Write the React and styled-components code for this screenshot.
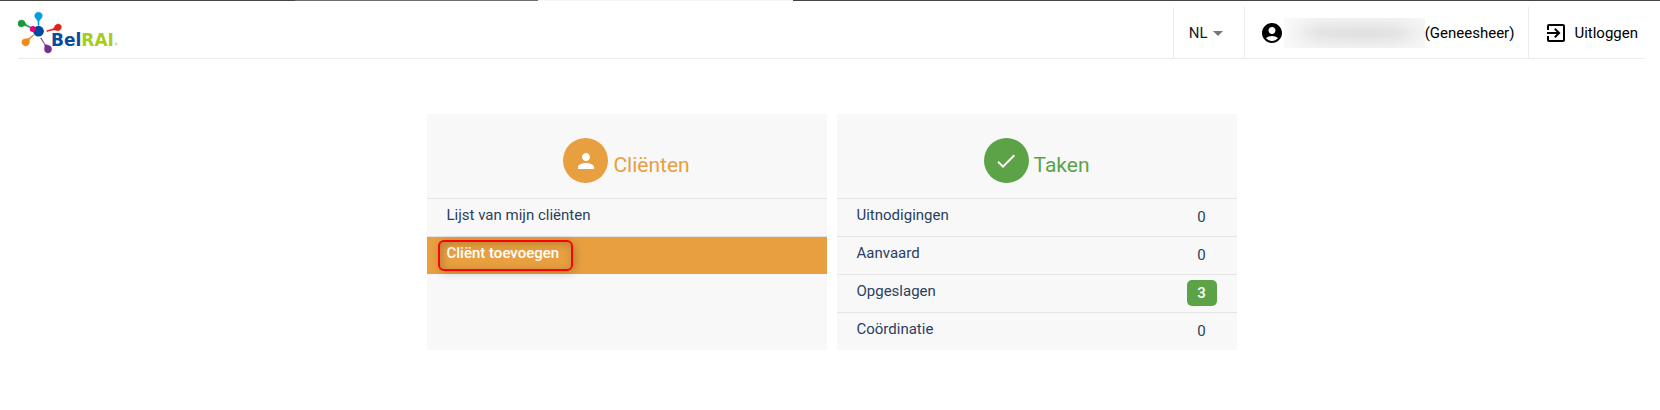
import React, { memo } from "react";
import styled, { createGlobalStyle } from "styled-components";
import {
  MdAccountCircle,
  MdArrowDropDown,
  MdCheck,
  MdExitToApp,
  MdPerson,
} from "react-icons/md";

const GlobalStyle = createGlobalStyle`
  * {
    box-sizing: border-box;
  }
  body {
    margin: 0;
    background: #fff;
    color: #000;
    font-family: Roboto, "Liberation Sans", sans-serif;
    font-size: 15px;
    line-height: 22px;
  }
  a {
    color: inherit;
    text-decoration: none;
  }
  ul {
    list-style: none;
    margin: 0;
    padding: 0;
  }
`;

const TopStrip = styled.div`
  height: 1px;
  background: linear-gradient(
    to right,
    #444 17.8%,
    #6c6c6c 17.8% 32.4%,
    #f6f6f6 32.4% 47.8%,
    #444 47.8%
  );
`;

const Page = styled.div`
  padding: 6px 15px 0 18px;
`;

const Header = styled.header`
  display: flex;
  justify-content: space-between;
  border-bottom: 1px solid #ececec;
`;

const LogoLink = styled.a`
  padding-top: 3px;

  svg {
    display: block;
  }
`;

const HeaderMenu = styled.div`
  display: flex;
`;

const HeaderItem = styled.div`
  display: flex;
  align-items: center;
  height: 51px;
  padding: 0 14px 0 15px;
  border-left: 1px solid #ececec;

  &:last-child {
    padding-right: 7px;
  }
  svg {
    flex: none;
  }
`;

const LanguageField = styled.label`
  display: grid;
  align-items: center;

  select,
  svg {
    grid-area: 1 / 1;
  }
  select {
    appearance: none;
    border: 0;
    margin: 0;
    padding: 0 22px 0 0;
    background: transparent;
    color: #222;
    font: inherit;
  }
  svg {
    justify-self: end;
    color: #757575;
    pointer-events: none;
  }
`;

const HiddenName = styled.span`
  width: 141px;
  height: 30px;
  background: linear-gradient(
      to bottom,
      rgba(248, 248, 248, 0.7),
      rgba(248, 248, 248, 0) 45% 55%,
      rgba(248, 248, 248, 0.7)
    ),
    linear-gradient(
      to right,
      #fafafa,
      #e4e4e4 25%,
      #e0e0e0 60%,
      #e4e4e4 80%,
      #f4f4f4
    );
`;

const LogoutLink = styled.a`
  display: flex;
  align-items: center;
  gap: 6px;
`;

const Cards = styled.main`
  display: flex;
  justify-content: center;
  gap: 10px;
  margin-top: 55px;
`;

const Card = styled.section`
  flex: 0 1 400px;
  background: #f8f8f8;
`;

const CardHead = styled.div`
  display: flex;
  justify-content: center;
  align-items: flex-end;
  gap: 5px;
  padding: 24px 0 15px;
  border-bottom: 1px solid #e4e4e4;
  color: ${(props) => props.$color};

  h2 {
    margin: 0;
    font-size: 21px;
    font-weight: 400;
    line-height: 36px;
  }
`;

const RoundIcon = styled.span`
  display: flex;
  align-items: center;
  justify-content: center;
  width: 45px;
  height: 45px;
  border-radius: 50%;
  background: ${(props) => props.$color};
  color: #fff;
`;

const Row = styled.li`
  & + & {
    border-top: 1px solid #e4e4e4;
  }
`;

const RowLink = styled.a`
  position: relative;
  display: flex;
  justify-content: space-between;
  height: 37px;
  padding: 5px 20px;
  background: ${(props) => (props.$active ? "#e79f3f" : "transparent")};
  && {
    color: ${(props) => (props.$active ? "#fff" : "#2a3f5f")};
  }
  font-weight: ${(props) => (props.$active ? 500 : 400)};
`;

const Highlight = styled.span`
  position: absolute;
  top: 3px;
  left: 11px;
  width: 135px;
  height: 31px;
  border: 2px solid #f00;
  border-radius: 6px;
  box-shadow: 2px 2px 8px rgba(0, 0, 0, 0.2),
    inset 2px 2px 8px rgba(0, 0, 0, 0.2);
`;

const Count = styled.span`
  width: 30px;
  height: 26px;
  border-radius: 5px;
  line-height: 26px;
  text-align: center;
  background: ${(props) => (props.$filled ? "#5ba346" : "transparent")};
  color: ${(props) => (props.$filled ? "#fff" : "inherit")};
  font-weight: ${(props) => (props.$filled ? 500 : 400)};
`;

const tasks = [
  { label: "Uitnodigingen", count: 0 },
  { label: "Aanvaard", count: 0 },
  { label: "Opgeslagen", count: 3 },
  { label: "Coördinatie", count: 0 },
];

const Logo = () => (
  <svg width="100" height="46" viewBox="18 10 100 46" aria-hidden="true">
    <g strokeWidth="0.5" strokeLinejoin="round">
      <path
        d="M38.5 12.2c-2.2 0-3.8 1.6-3.8 3.7 0 2.4 2.6 3.3 3.2 5.4l.1 4h1l.1-4c.6-2.1 3.2-3 3.2-5.4 0-2.1-1.6-3.7-3.8-3.7z"
        fill="#009fe0"
        stroke="#009fe0"
      />
      <path
        d="M19.6 20.6c-1.8 1-2.2 3-1.3 4.7 1 1.8 3.2 2 4.9 1 1.6-.8 2.7-.4 3.7 0l3.4 1.6.4-.8-3.4-1.8c-1.2-.6-1.6-1.3-2.3-3-.8-1.9-3.2-2.9-5.4-1.7z"
        fill="#149b3b"
        stroke="#149b3b"
      />
      <path
        d="M59.4 24.2c2 .6 2.3 2.6 1.6 4.3-.7 2-2.7 2.7-4.6 2-1.7-.6-2.8-.6-4.1-.3l-5.4 1.4-.3-.9 5.4-1.6c1.3-.5 2-1 2.7-2.7.6-1.7 2.6-2.9 4.7-2.2z"
        fill="#df2318"
        stroke="#df2318"
      />
      <path
        d="M22.9 39.6c1.3-1 2.6-.9 4-.9 1.3 0 2.2-.7 3-1.3l3.3-2.7.6.7-3.1 2.8c-.9.8-1.2 1.6-1.2 3.2 0 2.7-1.6 4.7-4 4.6-3.3-.2-4.8-4.3-2.6-6.4z"
        fill="#f18a1e"
        stroke="#f18a1e"
      />
      <path
        d="M41.2 37.9l2.7 4.7c.7 1.3 1.5 2.2 3.4 2.5 2.6.3 4.4 1.6 4.3 4.2-.1 2.4-1.8 3.9-4 3.6-2.5-.3-3.6-2.6-3-4.7.5-2 .2-3.3-.5-4.6l-3.5-5.3z"
        fill="#75308b"
        stroke="#75308b"
      />
    </g>
    <circle cx="38.5" cy="31.2" r="5.4" fill="#004b9b" />
    <circle cx="32.8" cy="29.1" r="3" fill="#e5007e" />
    <text
      x="51"
      y="46"
      fontFamily="'DejaVu Sans', sans-serif"
      fontSize="17"
      fontWeight="700"
      fill="#0a4a9c"
    >
      Bel
      <tspan fill="#a8cc1c">RAI</tspan>
    </text>
    <circle cx="116" cy="44" r="1" fill="none" stroke="#c6dd6a" />
  </svg>
);

const App = memo(() => {
  return (
    <>
      <GlobalStyle />
      <TopStrip />
      <Page>
        <Header>
          <LogoLink href="#" aria-label="BelRAI">
            <Logo />
          </LogoLink>
          <HeaderMenu>
            <HeaderItem>
              <LanguageField>
                <select aria-label="Taal" defaultValue="NL">
                  <option>NL</option>
                </select>
                <MdArrowDropDown size={24} />
              </LanguageField>
            </HeaderItem>
            <HeaderItem>
              <MdAccountCircle size={24} />
              <HiddenName />
              <span>(Geneesheer)</span>
            </HeaderItem>
            <HeaderItem>
              <LogoutLink href="#">
                <MdExitToApp size={24} />
                Uitloggen
              </LogoutLink>
            </HeaderItem>
          </HeaderMenu>
        </Header>
        <Cards>
          <Card>
            <CardHead $color="#e79f3f">
              <RoundIcon $color="#e79f3f">
                <MdPerson size={24} />
              </RoundIcon>
              <h2>Cliënten</h2>
            </CardHead>
            <ul>
              <Row>
                <RowLink href="#">Lijst van mijn cliënten</RowLink>
              </Row>
              <Row>
                <RowLink href="#" $active>
                  Cliënt toevoegen
                  <Highlight />
                </RowLink>
              </Row>
            </ul>
          </Card>
          <Card>
            <CardHead $color="#5ba346">
              <RoundIcon $color="#5ba346">
                <MdCheck size={24} />
              </RoundIcon>
              <h2>Taken</h2>
            </CardHead>
            <ul>
              {tasks.map((task) => (
                <Row key={task.label}>
                  <RowLink href="#">
                    {task.label}
                    <Count $filled={task.count > 0}>{task.count}</Count>
                  </RowLink>
                </Row>
              ))}
            </ul>
          </Card>
        </Cards>
      </Page>
    </>
  );
});

export default App;
